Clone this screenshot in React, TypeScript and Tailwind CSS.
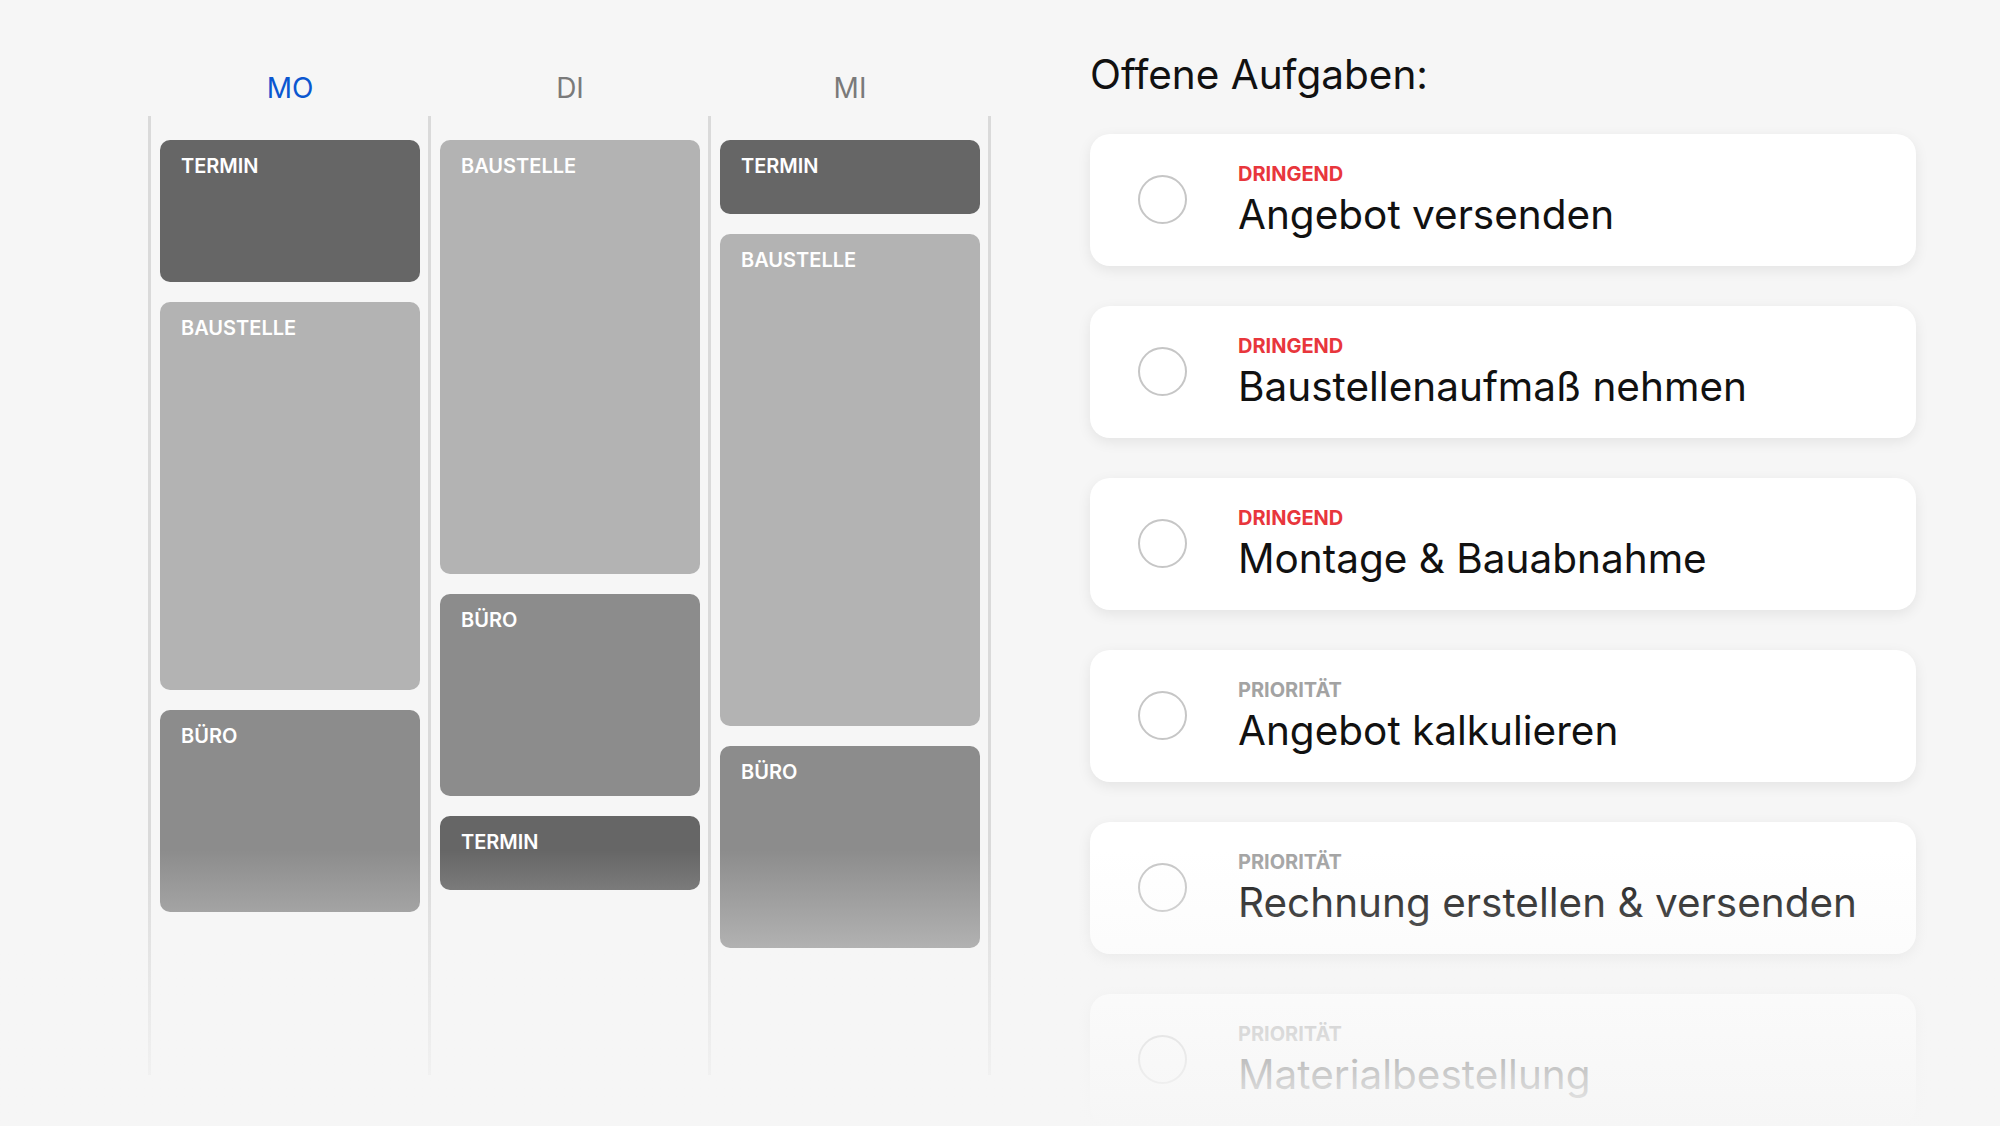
import React from "react";

type Block = { label: string; h: number; kind: "termin" | "baustelle" | "buero" };

const kindClass: Record<Block["kind"], string> = {
  termin: "bg-[#666666]",
  baustelle: "bg-[#b3b3b3]",
  buero: "bg-[#8c8c8c]",
};

const days: { name: string; active?: boolean; blocks: Block[] }[] = [
  {
    name: "MO",
    active: true,
    blocks: [
      { label: "TERMIN", h: 142, kind: "termin" },
      { label: "BAUSTELLE", h: 388, kind: "baustelle" },
      { label: "BÜRO", h: 202, kind: "buero" },
    ],
  },
  {
    name: "DI",
    blocks: [
      { label: "BAUSTELLE", h: 434, kind: "baustelle" },
      { label: "BÜRO", h: 202, kind: "buero" },
      { label: "TERMIN", h: 74, kind: "termin" },
    ],
  },
  {
    name: "MI",
    blocks: [
      { label: "TERMIN", h: 74, kind: "termin" },
      { label: "BAUSTELLE", h: 492, kind: "baustelle" },
      { label: "BÜRO", h: 202, kind: "buero" },
    ],
  },
];

const tasks: { tag: string; urgent: boolean; title: string }[] = [
  { tag: "DRINGEND", urgent: true, title: "Angebot versenden" },
  { tag: "DRINGEND", urgent: true, title: "Baustellenaufmaß nehmen" },
  { tag: "DRINGEND", urgent: true, title: "Montage & Bauabnahme" },
  { tag: "PRIORITÄT", urgent: false, title: "Angebot kalkulieren" },
  { tag: "PRIORITÄT", urgent: false, title: "Rechnung erstellen & versenden" },
  { tag: "PRIORITÄT", urgent: false, title: "Materialbestellung" },
];

export default function App() {
  return (
    <div className="relative w-[2000px] h-[1126px] overflow-hidden bg-[#f6f6f6] flex font-['Inter','Noto_Sans',sans-serif]">
      {/* Calendar */}
      <div className="ml-[148px] pt-[71px] flex">
        {days.map((d, i) => (
          <div key={d.name} className="flex flex-col">
            <div
              className={`h-[34px] mb-[11px] pl-[12px] pr-[8px] w-[280px] text-center text-[28px] leading-[34px] ${
                d.active ? "text-[#0b57d0]" : "text-[#7a7a7a]"
              }`}
            >
              {d.name}
            </div>
            <div
              className={`h-[959px] border-l-[3px] border-[#dadada] pt-[24px] pl-[9px] pr-[8px] flex flex-col gap-[20px] ${
                i === days.length - 1 ? "border-r-[3px] w-[283px]" : "w-[280px]"
              }`}
            >
              {d.blocks.map((b, j) => (
                <div
                  key={j}
                  className={`w-[260px] shrink-0 rounded-[10px] pt-[14px] px-[21px] ${kindClass[b.kind]}`}
                  style={{ height: b.h }}
                >
                  <span className="text-white text-[20px] leading-[24px] font-semibold">{b.label}</span>
                </div>
              ))}
            </div>
          </div>
        ))}
      </div>

      {/* Tasks */}
      <div className="ml-[99px] pt-[51px] flex flex-col">
        <h2 className="text-[40.5px] leading-[48px] font-normal text-[#111111] mb-[35px]">Offene Aufgaben:</h2>
        <div className="flex flex-col gap-[40px]">
          {tasks.map((t) => (
            <div
              key={t.title}
              className="w-[826px] h-[132px] shrink-0 bg-white rounded-[20px] shadow-[0_4px_14px_rgba(0,0,0,0.08)] flex items-center pl-[48px]"
            >
              <div className="w-[49px] h-[49px] rounded-full border-2 border-[#c6c6c6] shrink-0 -mt-[2px]" />
              <div className="ml-[51px] flex flex-col pt-[2px]">
                <span
                  className={`text-[20px] leading-[23px] font-bold ${
                    t.urgent ? "text-[#e8363c]" : "text-[#a3a3a3]"
                  }`}
                >
                  {t.tag}
                </span>
                <span className="mt-[5px] text-[40.5px] leading-[48px] text-[#111111]">{t.title}</span>
              </div>
            </div>
          ))}
        </div>
      </div>

      {/* bottom fade */}
      <div className="pointer-events-none absolute left-0 right-0 top-[850px] bottom-0 bg-linear-to-b from-[#f6f6f6]/0 to-[#f6f6f6]" />
    </div>
  );
}
